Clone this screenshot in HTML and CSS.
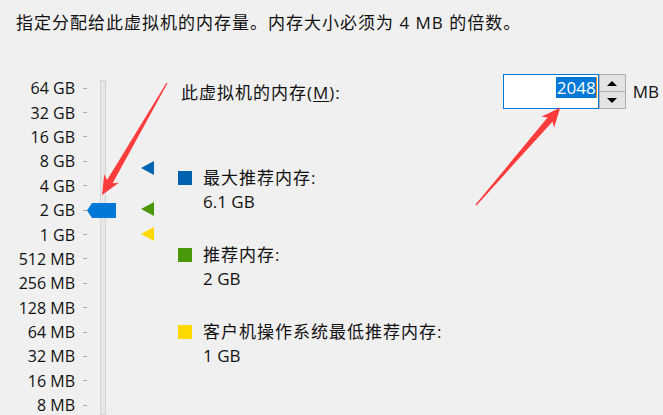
FILE: index.html
```html
<!DOCTYPE html>
<html lang="zh-CN">
  <head>
    <meta charset="UTF-8" />
    <meta name="viewport" content="width=device-width, initial-scale=1.0" />
    <title>内存</title>
    <link rel="stylesheet" href="styles.css">
  </head>
  <body>
    <div class="page">
      <p class="intro">指定分配给此虚拟机的内存量。内存大小必须为 4 MB 的倍数。</p>

      <div class="main">
        <ul class="scale">
          <li><span>64 GB</span></li>
          <li><span>32 GB</span></li>
          <li><span>16 GB</span></li>
          <li><span>8 GB</span></li>
          <li><span>4 GB</span></li>
          <li><span>2 GB</span></li>
          <li><span>1 GB</span></li>
          <li><span>512 MB</span></li>
          <li><span>256 MB</span></li>
          <li><span>128 MB</span></li>
          <li><span>64 MB</span></li>
          <li><span>32 MB</span></li>
          <li><span>16 MB</span></li>
          <li><span>8 MB</span></li>
        </ul>

        <div class="slider">
          <div class="track"></div>
          <svg class="thumb" width="29" height="15" viewBox="0 0 29 15">
            <polygon points="0,7.5 5,0 29,0 29,15 5,15" fill="#0078d7" />
          </svg>
          <span class="marker marker-max"></span>
          <span class="marker marker-rec"></span>
          <span class="marker marker-min"></span>
        </div>

        <div class="details">
          <div class="memory-row">
            <label class="memory-label" for="memory">此虚拟机的内存(<u>M</u>):</label>
            <div class="spin">
              <div class="spin-input" id="memory"><span class="spin-value">2048</span></div>
              <div class="spin-buttons">
                <span class="spin-btn spin-up"></span>
                <span class="spin-btn spin-down"></span>
              </div>
            </div>
            <span class="unit">MB</span>
          </div>

          <ul class="legend">
            <li class="legend-item">
              <span class="swatch swatch-max"></span>
              <div>
                <div class="legend-title">最大推荐内存:</div>
                <div class="legend-value">6.1 GB</div>
              </div>
            </li>
            <li class="legend-item">
              <span class="swatch swatch-rec"></span>
              <div>
                <div class="legend-title">推荐内存:</div>
                <div class="legend-value">2 GB</div>
              </div>
            </li>
            <li class="legend-item">
              <span class="swatch swatch-min"></span>
              <div>
                <div class="legend-title">客户机操作系统最低推荐内存:</div>
                <div class="legend-value">1 GB</div>
              </div>
            </li>
          </ul>
        </div>
      </div>

      <!-- red annotation arrows drawn over the dialog -->
      <svg class="annotations" width="663" height="415" viewBox="0 0 663 415">
        <path transform="translate(167 83) rotate(120.1)" d="M0,-0.6 L114,-3.2 L110.5,-8.5 L129.5,0 L110.5,8.5 L114,3.2 L0,0.6 Z" fill="#ff3c3c" />
        <path transform="translate(476 205) rotate(-49.1)" d="M0,-0.6 L113,-3.2 L109.5,-8.5 L128.5,0 L109.5,8.5 L113,3.2 L0,0.6 Z" fill="#ff3c3c" />
      </svg>
    </div>
  </body>
</html>
```

FILE: styles.css
```css
body {
  margin: 0;
  background-color: #f0f0f0;
  font-family: "Open Sans", "Noto Sans CJK SC", sans-serif;
  font-size: 17px;
  color: #111;
}

.page {
  position: relative;
  width: 663px;
  height: 415px;
  overflow: hidden;
}

.intro {
  margin: 0;
  padding: 11px 0 0 16px;
  line-height: 24px;
  letter-spacing: 1px;
}

.main {
  display: flex;
  margin-top: 39px;
  height: 341px;
}

/* scale labels on the left */
.scale {
  list-style: none;
  margin: 0;
  padding: 2px 0 0 0;
  width: 88px;
  font-size: 16px;
}

.scale li {
  display: flex;
  align-items: center;
  height: 24.4px;
}

.scale span {
  width: 75px;
  text-align: right;
  line-height: 24px;
}

.scale li::after {
  content: "";
  width: 4px;
  height: 1px;
  margin-left: 8px;
  background-color: #a8a8a8;
}

/* slider */
.slider {
  position: relative;
  width: 90px;
}

.track {
  box-sizing: border-box;
  width: 6px;
  height: calc(100% - 6px);
  margin: 6px 0 0 12px;
  background-color: #e7e7e7;
  border: 1px solid #d4d4d4;
}

.thumb {
  position: absolute;
  left: -1px;
  top: 129px;
}

.marker {
  position: absolute;
  left: 53px;
  width: 0;
  height: 0;
  border-top: 7px solid transparent;
  border-bottom: 7px solid transparent;
  border-right: 13px solid #0063b1;
}

.marker-max {
  top: 87px;
}

.marker-rec {
  top: 128px;
  border-right-color: #4a980a;
}

.marker-min {
  top: 153px;
  border-right-color: #ffd800;
}

/* right side */
.details {
  flex: 1;
  padding-right: 4px;
}

.memory-row {
  display: flex;
  align-items: center;
  height: 35px;
}

.memory-label {
  margin-left: 3px;
  letter-spacing: 1px;
}

.memory-label u {
  text-underline-offset: 2px;
}

.spin {
  display: flex;
  margin-left: auto;
}

.spin-input {
  box-sizing: border-box;
  display: flex;
  justify-content: flex-end;
  align-items: flex-start;
  width: 96px;
  height: 35px;
  padding: 2px 1px 0 0;
  background-color: #fff;
  border: 1px solid #0078d7;
}

.spin-value {
  height: 21px;
  line-height: 21px;
  padding-left: 1px;
  background-color: #0078d7;
  color: #fff;
  border-right: 1px solid #e88a20;
}

.spin-buttons {
  display: flex;
  flex-direction: column;
  width: 27px;
}

.spin-btn {
  box-sizing: border-box;
  display: flex;
  justify-content: center;
  align-items: center;
  background-color: #e3e3e3;
  border: 1px solid #adadad;
}

.spin-up {
  height: 18px;
}

.spin-down {
  height: 17px;
  border-top: none;
}

.spin-up::after,
.spin-down::after {
  content: "";
  width: 0;
  height: 0;
  border-left: 5px solid transparent;
  border-right: 5px solid transparent;
}

.spin-up::after {
  border-bottom: 5px solid #000;
}

.spin-down::after {
  border-top: 5px solid #000;
}

.unit {
  margin-left: 7px;
}

.legend {
  list-style: none;
  margin: 57px 0 0 0;
  padding: 0;
}

.legend-item {
  display: flex;
  align-items: flex-start;
  margin-bottom: 29px;
}

.swatch {
  width: 14px;
  height: 14px;
  margin: 5px 11px 0 0;
  background-color: #0063b1;
}

.swatch-rec {
  background-color: #4a980a;
}

.swatch-min {
  background-color: #ffd800;
}

.legend-title {
  line-height: 24px;
  letter-spacing: 1px;
}

.legend-value {
  line-height: 24px;
}

.annotations {
  position: absolute;
  top: 0;
  left: 0;
  pointer-events: none;
}
```
